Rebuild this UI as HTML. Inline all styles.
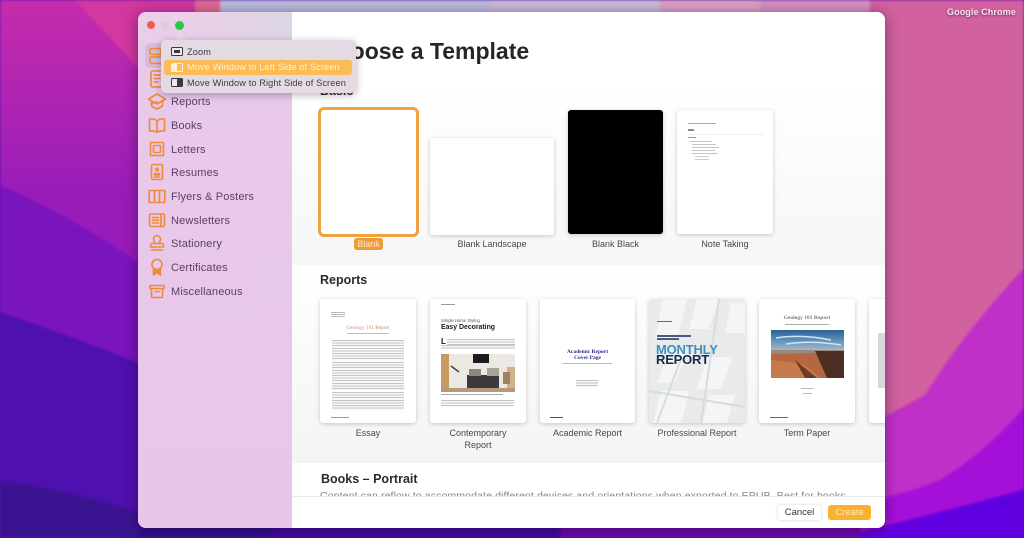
<!DOCTYPE html>
<html lang="en"><head><meta charset="utf-8"><title>Choose a Template</title>
<style>
*{box-sizing:border-box;margin:0;padding:0}
html,body{width:1024px;height:538px;overflow:hidden;background:#5a10b0;font-family:"Liberation Sans",sans-serif}
.a{position:absolute}
#all{position:absolute;left:0;top:0;width:1024px;height:538px;filter:blur(.35px)}
#wp{position:absolute;left:0;top:0;filter:blur(1.2px)}
#win{position:absolute;left:138px;top:12px;width:747px;height:516px;border-radius:8px;overflow:hidden;background:#fff}
#shd{position:absolute;left:138px;top:12px;width:747px;height:516px;border-radius:8px;box-shadow:0 2px 14px rgba(40,0,60,.5)}
#side{position:absolute;left:0;top:0;width:154px;height:516px;background:linear-gradient(180deg,#e9d0e8 0,#e9c9ea 60px,#e8c6ea 100%)}
#side:before{content:"";position:absolute;left:60px;top:0;width:94px;height:40px;background:linear-gradient(90deg,rgba(220,215,225,0),rgba(218,214,226,.9));}
.si{position:absolute;left:33px;font-size:11px;line-height:14px;color:#5b4068;letter-spacing:.15px;white-space:nowrap}
.ic{position:absolute;left:9px;width:20px;height:20px;fill:none;stroke:#ee8a38;stroke-width:1.6;stroke-linejoin:round;stroke-linecap:round}
.c{position:absolute;background:#fff;border-radius:3px;box-shadow:0 1px 5px rgba(0,0,0,.2);overflow:hidden}
.l{position:absolute;font-size:9px;line-height:12px;color:#484848;text-align:center}
.h{position:absolute;font-weight:700;color:#2a2a2a;white-space:nowrap}
.ln{position:absolute;background:repeating-linear-gradient(180deg,#c4c4c4 0,#c4c4c4 1px,#f8f8f8 1px,#f8f8f8 2.6px)}
.t{position:absolute;white-space:nowrap;line-height:1}
.m{position:absolute;left:187px;font-size:9.2px;line-height:12px;color:#403844;white-space:nowrap;letter-spacing:.12px}
.mi{position:absolute;left:171px;width:12px;height:9px;border:1px solid #3c3840;border-radius:1.5px;background:#efe8ef}
</style></head><body>
<div id="all">
<svg id="wp" width="1024" height="538" viewBox="0 0 1024 538">
<defs>
<linearGradient id="g1" gradientUnits="userSpaceOnUse" x1="0" y1="0" x2="0" y2="200"><stop offset="0" stop-color="#c62cac"/><stop offset="1" stop-color="#971cb9"/></linearGradient>
</defs>
<rect x="-5" y="-5" width="1034" height="548" fill="url(#g1)"/>
<path d="M70 -5H210V70H140Z" fill="#d2389f"/>
<path d="M-5 183Q70 215 145 267V400H-5Z" fill="#7a14bc"/>
<path d="M-5 311Q70 335 145 366V545H-5Z" fill="#4e10ae"/>
<path d="M-5 480Q70 490 145 515V545H-5Z" fill="#3a1490"/>
<rect x="140" y="500" width="420" height="45" fill="#2e0f88"/>
<path d="M280 526H620L570 545H250Z" fill="#3f0a9c"/>
<rect x="560" y="520" width="330" height="25" fill="#6a08ae"/>
<rect x="195" y="-5" width="40" height="19" fill="#e06a8c"/>
<rect x="220" y="-5" width="280" height="19" fill="#b9bcdc"/>
<rect x="490" y="-5" width="170" height="19" fill="#cbbbd6"/>
<rect x="660" y="-5" width="100" height="19" fill="#dba2c2"/>
<rect x="760" y="-5" width="130" height="19" fill="#d592bf"/>
<rect x="870" y="-5" width="160" height="548" fill="#d2619f"/>
<path d="M1030 262Q965 330 925 395L860 430V545H1030Z" fill="#c030c8"/>
<path d="M1030 400Q990 450 940 480Q905 495 860 502V545H1030Z" fill="#a410d8"/>
<path d="M1030 488Q950 510 860 532V545H1030Z" fill="#6000e0"/>
</svg>
<div class="t" style="left:947px;top:8px;font-size:9px;font-weight:700;color:#f5e6f2;text-shadow:0 1px 2px rgba(60,0,60,.6);letter-spacing:.1px">Google Chrome</div>

<div id="shd"></div>
<div id="win">
<div class="a" style="left:154px;top:0;width:593px;height:253px;background:linear-gradient(180deg,#fff 0,#fff 75px,#f6f6f6 253px)"></div>
<div class="a" style="left:154px;top:253px;width:593px;height:198px;background:linear-gradient(180deg,#fff 0,#f4f4f4 198px)"></div>

<div id="side">
<div class="a" style="left:7px;top:31px;width:40px;height:25px;border-radius:5px;background:#d6bcd8"></div>
<svg class="ic" style="top:34px" viewBox="0 0 20 20"><rect x="3" y="2.5" width="11" height="6" rx="1.5"/><rect x="3" y="11" width="14" height="6.5" rx="1.5"/></svg>
<svg class="ic" style="top:57px" viewBox="0 0 20 20"><rect x="4" y="2" width="12" height="16" rx="1.5"/><path d="M7 6h6M7 9.5h6M7 13h4"/></svg>
<svg class="ic" style="top:79px" viewBox="0 0 20 20"><path d="M1.5 8 10 3l8.500 5-8.500 5zM4.500 10v5l5.500 3 5.500-3v-5"/><path d="M5 13l5-2.500"/></svg>
<svg class="ic" style="top:103px" viewBox="0 0 20 20"><path d="M10 6C8 3.800 4.500 3.500 2.500 4v12c2-.5 5.500-.2 7.500 1.500 2-1.700 5.500-2 7.500-1.500V4c-2-.5-5.500-.2-7.500 2zM10 6v11"/></svg>
<svg class="ic" style="top:127px" viewBox="0 0 20 20"><rect x="3.500" y="3.500" width="13" height="13" rx=".5" stroke-dasharray="1.600 .6"/><rect x="6.500" y="6.500" width="7" height="7" rx="1"/></svg>
<svg class="ic" style="top:150px" viewBox="0 0 20 20"><rect x="4.500" y="2.500" width="11" height="15" rx="1.500"/><circle cx="10" cy="7.500" r="1.300"/><path d="M7.500 13v-1.500h5V13zM7.500 15h5"/></svg>
<svg class="ic" style="top:174px" viewBox="0 0 20 20"><path d="M3 4.500h14a.8.8 0 0 1 .8.8v10.400a.8.8 0 0 1-.8.8H3a.8.8 0 0 1-.8-.8V5.300a.8.8 0 0 1 .8-.8zM7.500 4.500v12M12.500 4.500v12"/></svg>
<svg class="ic" style="top:198px" viewBox="0 0 20 20"><rect x="2.500" y="4" width="15" height="12.500" rx="1.500"/><path d="M14 4v12.500M5.500 7.500h6M5.500 10.200h6M5.500 13h6"/></svg>
<svg class="ic" style="top:221px" viewBox="0 0 20 20"><path d="M7.500 10.500c.5-1.500-1-2.500-1-4.500a3.500 3.500 0 0 1 7 0c0 2-1.500 3-1 4.500M3.500 13a2 2 0 0 1 2-2.500h9a2 2 0 0 1 2 2.500v1h-13zM4.500 17h11"/></svg>
<svg class="ic" style="top:245px" viewBox="0 0 20 20"><circle cx="10" cy="7.500" r="5"/><path d="M6.500 12v6l3.500-2.500 3.500 2.500v-6" fill="#ee8a38"/></svg>
<svg class="ic" style="top:269px" viewBox="0 0 20 20"><path d="M3 4.500h14v3H3zM4.500 7.500v8a1 1 0 0 0 1 1h9a1 1 0 0 0 1-1v-8M8 10.500h4"/></svg>
<div class="si" style="top:83px">Reports</div>
<div class="si" style="top:107px">Books</div>
<div class="si" style="top:131px">Letters</div>
<div class="si" style="top:154px">Resumes</div>
<div class="si" style="top:178px">Flyers &amp; Posters</div>
<div class="si" style="top:202px">Newsletters</div>
<div class="si" style="top:225px">Stationery</div>
<div class="si" style="top:249px">Certificates</div>
<div class="si" style="top:273px">Miscellaneous</div>
</div>

<div class="h" style="left:182px;top:25px;font-size:23px;line-height:28px;color:#262626">Choose a Template</div>
<div class="h" style="left:182px;top:72px;font-size:12.500px;line-height:15px">Basic</div>
<div class="h" style="left:182px;top:261px;font-size:12.500px;line-height:15px">Reports</div>
<div class="a" style="left:154px;top:451px;width:593px;height:65px;background:#fff"></div>
<div class="h" style="left:183px;top:460px;font-size:12.500px;line-height:15px">Books – Portrait</div>
<div class="a" style="left:182px;top:478px;height:6.500px;width:540px;overflow:hidden;font-size:10.500px;line-height:12px;color:#888;white-space:nowrap;letter-spacing:.12px">Content can reflow to accommodate different devices and orientations when exported to EPUB. Best for books</div>
<div class="a" style="left:154px;top:484px;width:593px;height:32px;background:#fff;border-top:1px solid #ececec"></div>
<div class="a" style="left:640px;top:493px;width:43px;height:15px;border-radius:3px;background:#fff;box-shadow:0 0 3px rgba(0,0,0,.18);font-size:9.500px;line-height:15px;text-align:center;color:#333">Cancel</div>
<div class="a" style="left:690px;top:493px;width:43px;height:15px;border-radius:3px;background:#fbb02e;font-size:9.500px;line-height:15px;text-align:center;color:#fde9bd">Create</div>

<!-- Basic -->
<div class="c" style="left:180px;top:95px;width:101px;height:130px;border:3px solid #efa23f;border-radius:6px;box-shadow:none"></div>
<div class="a" style="left:216px;top:226px;width:29px;height:12px;background:#f09c34;border-radius:3px;font-size:9px;line-height:12px;color:#fde8cf;text-align:center">Blank</div>
<div class="c" style="left:292px;top:126px;width:124px;height:97px"></div>
<div class="l" style="left:292px;top:226px;width:124px">Blank Landscape</div>
<div class="c" style="left:430px;top:98px;width:95px;height:124px;background:#000"></div>
<div class="l" style="left:430px;top:226px;width:95px">Blank Black</div>
<div class="c" style="left:539px;top:98px;width:96px;height:124px">
 <div class="a" style="left:11px;top:13px;width:28px;height:1px;background:#aaa"></div>
 <div class="a" style="left:11px;top:19px;width:6px;height:1.500px;background:#888"></div>
 <div class="a" style="left:11px;top:24px;width:75px;height:1px;background:#eee"></div>
 <div class="a" style="left:11px;top:27px;width:8px;height:1px;background:#999"></div>
 <div class="a" style="left:13px;top:31px;width:22px;height:1px;background:#c4c4c4"></div>
 <div class="a" style="left:15px;top:34px;width:24px;height:1px;background:#c4c4c4"></div>
 <div class="a" style="left:15px;top:37px;width:27px;height:1px;background:#c4c4c4"></div>
 <div class="a" style="left:15px;top:40px;width:23px;height:1px;background:#c4c4c4"></div>
 <div class="a" style="left:15px;top:43px;width:26px;height:1px;background:#c4c4c4"></div>
 <div class="a" style="left:18px;top:46px;width:14px;height:1px;background:#ccc"></div>
 <div class="a" style="left:18px;top:49px;width:14px;height:1px;background:#ccc"></div>
</div>
<div class="l" style="left:539px;top:226px;width:96px">Note Taking</div>

<!-- Reports -->
<div class="c" style="left:182px;top:287px;width:96px;height:124px">
 <div class="a" style="left:11px;top:13px;width:14px;height:6px;background:repeating-linear-gradient(180deg,#bbb 0,#bbb 1px,#fff 1px,#fff 2px)"></div>
 <div class="t" style="left:0;width:96px;text-align:center;top:27px;font:5.300px/1 'Liberation Serif',serif;color:#c88a72">Geology 101 Report</div>
 <div class="a" style="left:27px;top:34px;width:42px;height:1px;background:#dcb4a6"></div>
 <div class="ln" style="left:12px;top:41px;width:72px;height:21px"></div>
 <div class="ln" style="left:12px;top:63px;width:72px;height:28px"></div>
 <div class="ln" style="left:12px;top:93px;width:72px;height:18px"></div>
 <div class="a" style="left:11px;top:118px;width:18px;height:1px;background:#999"></div>
</div>
<div class="l" style="left:182px;top:415px;width:96px">Essay</div>

<div class="c" style="left:292px;top:287px;width:96px;height:124px">
 <div class="a" style="left:11px;top:5px;width:14px;height:1px;background:#999"></div>
 <div class="t" style="left:11px;top:20px;font-size:4.200px;color:#555">Simple Home Styling</div>
 <div class="t" style="left:11px;top:26px;font-size:6.900px;font-weight:700;color:#1c1c1c">Easy Decorating</div>
 <div class="t" style="left:11px;top:39px;font-size:8px;font-weight:700;color:#111">L</div>
 <div class="ln" style="left:17px;top:40px;width:68px;height:6px"></div>
 <div class="ln" style="left:11px;top:46px;width:74px;height:4px"></div>
 <svg class="a" style="left:11px;top:55px" width="74" height="38" viewBox="0 0 74 38">
  <rect width="74" height="38" fill="#ece8e2"/><rect width="8" height="38" fill="#c79a62"/><rect x="32" width="16" height="9" fill="#1c1c1e"/><rect x="66" y="13" width="8" height="25" fill="#c9a478" opacity=".8"/>
  <path d="M26 21h32v13H26z" fill="#3c3a3e"/><path d="M28 15h12v7H28z" fill="#8a8680"/><path d="M46 14h12v8H46z" fill="#a7a29a"/><path d="M0 34h74v4H0z" fill="#b49a7c"/><path d="M10 12l8 6" stroke="#444" stroke-width="1.500"/><path d="M62 18h7v12h-7z" fill="#a08060"/>
 </svg>
 <div class="a" style="left:11px;top:95px;width:62px;height:1px;background:#aaa"></div>
 <div class="ln" style="left:11px;top:101px;width:73px;height:7px"></div>
</div>
<div class="l" style="left:292px;top:415px;width:96px">Contemporary<br>Report</div>

<div class="c" style="left:402px;top:287px;width:95px;height:124px">
 <div class="t" style="left:0;width:95px;text-align:center;top:50px;font:700 5.500px/6px 'Liberation Serif',serif;color:#2b2a90">Academic Report<br>Cover Page</div>
 <div class="a" style="left:22px;top:64px;width:50px;height:1px;background:#bbb"></div>
 <div class="ln" style="left:36px;top:81px;width:22px;height:7px"></div>
 <div class="a" style="left:10px;top:118px;width:13px;height:1px;background:#555"></div>
</div>
<div class="l" style="left:402px;top:415px;width:95px">Academic Report</div>

<div class="c" style="left:511px;top:287px;width:96px;height:124px;background:#e8eaeb">
 <svg class="a" style="left:0;top:0" width="96" height="124" viewBox="0 0 96 124">
  <path d="M14 0h24l-10 40H6zM48 0h22L60 30H40zM82 4h14v30H76zM58 58h26l-12 32H48zM12 92h28l-8 32H4zM60 96h26l-8 28H54zM20 52h18L26 84H8z" fill="#f4f6f6"/>
  <path d="M0 92L96 108M32 60L8 124M70 0L52 124" stroke="#d8dbdd" stroke-width="2" fill="none"/>
 </svg>
 <div class="a" style="left:8px;top:22px;width:15px;height:1px;background:#668"></div>
 <div class="a" style="left:8px;top:36px;width:34px;height:1.500px;background:#4a5a78"></div>
 <div class="a" style="left:8px;top:39px;width:22px;height:1.500px;background:#4a5a78"></div>
 <div class="t" style="left:7px;top:44px;font-size:13px;font-weight:700;color:#3f8fc2;letter-spacing:-.2px">MONTHLY</div>
 <div class="t" style="left:7px;top:54px;font-size:13px;font-weight:700;color:#16294e;letter-spacing:-.2px">REPORT</div>
</div>
<div class="l" style="left:511px;top:415px;width:96px">Professional Report</div>

<div class="c" style="left:621px;top:287px;width:96px;height:124px">
 <div class="t" style="left:0;width:96px;text-align:center;top:17px;font:700 5.500px/1 'Liberation Serif',serif;color:#7a7a7a">Geology 101 Report</div>
 <div class="a" style="left:26px;top:25px;width:44px;height:1px;background:#aaa"></div>
 <svg class="a" style="left:12px;top:31px" width="73" height="48" viewBox="0 0 73 48">
  <defs><linearGradient id="sk" x1="0" y1="0" x2="0" y2="1"><stop offset="0" stop-color="#2a5f96"/><stop offset=".6" stop-color="#6f9fc4"/><stop offset="1" stop-color="#b8bcc4"/></linearGradient></defs>
  <rect width="73" height="22" fill="url(#sk)"/><path d="M5 8Q30 4 60 10M15 14Q40 10 70 15" stroke="#d4e4f0" stroke-width="1.500" fill="none"/>
  <rect y="20" width="73" height="28" fill="#b5683f"/><path d="M0 20h73v3H40L0 24z" fill="#9a8a80"/><path d="M44 21h29v27H56z" fill="#4e2e22"/><path d="M0 30l32 4 18 14H0z" fill="#c47a4c"/><path d="M24 30l22 18H34z" fill="#6e3a24"/>
 </svg>
 <div class="a" style="left:42px;top:89px;width:13px;height:1px;background:#bbb"></div>
 <div class="a" style="left:44px;top:94px;width:9px;height:1px;background:#bbb"></div>
 <div class="a" style="left:11px;top:118px;width:18px;height:1px;background:#666"></div>
</div>
<div class="l" style="left:621px;top:415px;width:96px">Term Paper</div>

<div class="c" style="left:731px;top:287px;width:30px;height:124px">
 <div class="a" style="left:9px;top:34px;width:8px;height:55px;background:#d8d8da"></div>
</div>
</div>

<!-- Menu -->
<svg class="a" style="left:172px;top:31px" width="18" height="10" viewBox="0 0 18 10"><path d="M8 1 0 10H16Z" fill="#e6dce6"/></svg>
<div class="a" style="left:161px;top:40px;width:195px;height:53px;background:#e4dae4;border-radius:5px;box-shadow:0 2px 8px rgba(60,30,70,.35)"></div>
<div class="a" style="left:164px;top:60px;width:188px;height:15px;background:#fbbb55;border-radius:3px"></div>
<div class="mi" style="top:47px"><div class="a" style="left:2px;top:2px;width:6px;height:3px;background:#3c3840"></div></div>
<div class="mi" style="top:63px;border-color:#fdf1dc;background:#fbbb55"><div class="a" style="left:0;top:0;width:5px;height:7px;background:#fdf1dc"></div></div>
<div class="mi" style="top:78px"><div class="a" style="left:5px;top:0;width:5px;height:7px;background:#3c3840"></div></div>
<div class="m" style="top:46px">Zoom</div>
<div class="m" style="top:61px;color:#fdf0d4">Move Window to Left Side of Screen</div>
<div class="m" style="top:77px">Move Window to Right Side of Screen</div>

<div class="a" style="left:147px;top:21px;width:8px;height:8px;border-radius:50%;background:#f2594f"></div>
<div class="a" style="left:161px;top:21px;width:8px;height:8px;border-radius:50%;background:#d8cedc"></div>
<div class="a" style="left:175px;top:21px;width:9px;height:9px;border-radius:50%;background:#2cc84a"></div>
</div>
</body></html>
